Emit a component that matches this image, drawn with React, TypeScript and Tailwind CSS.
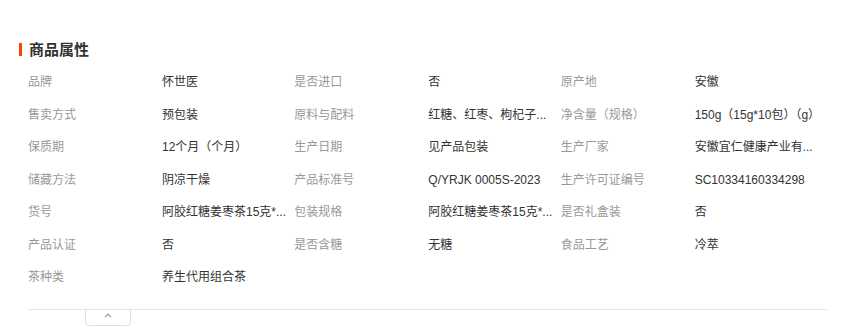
const rows: [string, string][][] = [
  [["品牌", "怀世医"], ["是否进口", "否"], ["原产地", "安徽"]],
  [["售卖方式", "预包装"], ["原料与配料", "红糖、红枣、枸杞子..."], ["净含量（规格）", "150g（15g*10包）（g）"]],
  [["保质期", "12个月（个月）"], ["生产日期", "见产品包装"], ["生产厂家", "安徽宜仁健康产业有..."]],
  [["储藏方法", "阴凉干燥"], ["产品标准号", "Q/YRJK 0005S-2023"], ["生产许可证编号", "SC10334160334298"]],
  [["货号", "阿胶红糖姜枣茶15克*..."], ["包装规格", "阿胶红糖姜枣茶15克*..."], ["是否礼盒装", "否"]],
  [["产品认证", "否"], ["是否含糖", "无糖"], ["食品工艺", "冷萃"]],
  [["茶种类", "养生代用组合茶"]],
];

function Attr({ label, value }: { label: string; value: string }) {
  return (
    <div className="flex items-center h-[32.5px]">
      <span className="w-[134px] shrink-0 whitespace-nowrap text-[#999]">{label}</span>
      <span className="whitespace-nowrap text-[#333]">{value}</span>
    </div>
  );
}

export default function App() {
  return (
    <div
      className="w-[867px] h-[335px] bg-white overflow-hidden pl-[19px] pt-[41px]"
      style={{ fontFamily: "'Liberation Sans', 'Noto Sans CJK SC', sans-serif" }}
    >
      <div className="flex items-center h-[16px] gap-[7px]">
        <span className="w-[3px] h-[13px] bg-[#ff4400]" />
        <h2 className="text-[15px] font-bold text-[#333] leading-none">商品属性</h2>
      </div>
      <div className="ml-[9px] w-[799px] mt-[9px]">
        <div className="grid grid-cols-3 text-[12px]">
          {rows.flat().map(([l, v], i) => (
            <Attr key={i} label={l} value={v} />
          ))}
        </div>
        <div className="mt-[15px] border-t border-[#e5e5e5]">
          <div className="ml-[57px] -mt-px w-[46px] h-[17px] border-x border-b border-[#e0e0e0] rounded-b-[4px] flex items-center justify-center">
            <svg width="8" height="5" viewBox="0 0 8 5" fill="none" className="-mt-[3px]">
              <path d="M1 4.2 L4 1.2 L7 4.2" stroke="#999" strokeWidth="1.2" />
            </svg>
          </div>
        </div>
      </div>
    </div>
  );
}
